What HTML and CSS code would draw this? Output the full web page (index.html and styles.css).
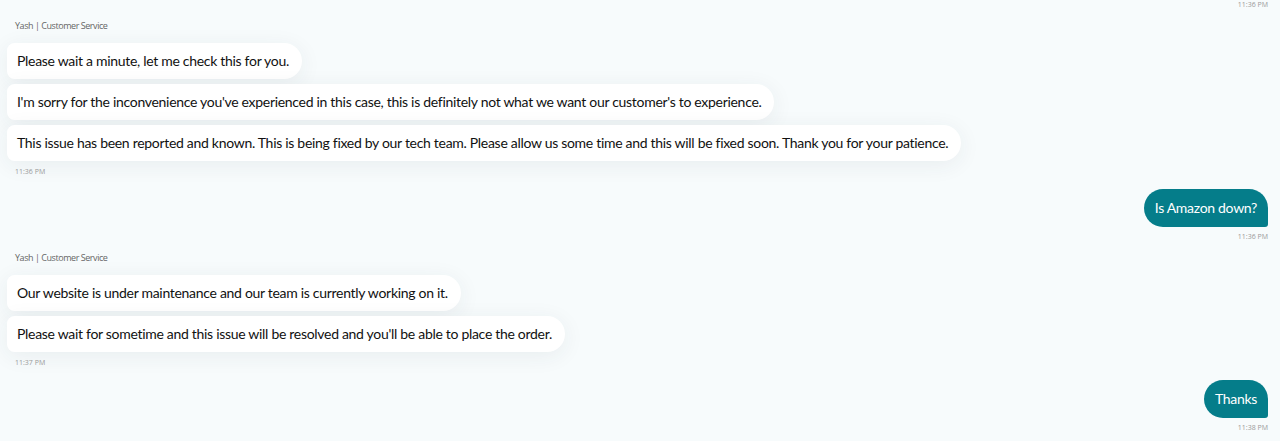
FILE: index.html
```html
<!DOCTYPE html>
<html>
<head>
<meta charset="utf-8">
<link rel="stylesheet" href="styles.css">
</head>
<body>
<div class="chat">
  <div class="stamp stamp-right stamp-top">11:36 PM</div>

  <div class="group agent">
    <div class="sender">Yash | Customer Service</div>
    <div class="bubble in first">Please wait a minute, let me check this for you.</div>
    <div class="bubble in">I'm sorry for the inconvenience you've experienced in this case, this is definitely not what we want our customer's to experience.</div>
    <div class="bubble in">This issue has been reported and known. This is being fixed by our tech team. Please allow us some time and this will be fixed soon. Thank you for your patience.</div>
    <div class="stamp">11:36 PM</div>
  </div>

  <div class="group user">
    <div class="bubble out">Is Amazon down?</div>
    <div class="stamp stamp-right">11:36 PM</div>
  </div>

  <div class="group agent">
    <div class="sender">Yash | Customer Service</div>
    <div class="bubble in first">Our website is under maintenance and our team is currently working on it.</div>
    <div class="bubble in">Please wait for sometime and this issue will be resolved and you'll be able to place the order.</div>
    <div class="stamp">11:37 PM</div>
  </div>

  <div class="group user">
    <div class="bubble out">Thanks</div>
    <div class="stamp stamp-right">11:38 PM</div>
  </div>
</div>
</body>
</html>
```
FILE: styles.css
```css
html, body {
  margin: 0;
  padding: 0;
}
body {
  background: #f7fbfc;
  font-family: Lato, "Noto Sans", Arial, sans-serif;
  height: 441px;
  overflow: hidden;
}
.chat {
  display: flex;
  flex-direction: column;
  padding: 0 12px 0 7px;
}
.stamp {
  font-size: 7px;
  line-height: 9px;
  color: #9a9a9a;
  padding-left: 8px;
  margin-top: 6px;
  font-family: "Open Sans", sans-serif;
}
.stamp-right {
  text-align: right;
  padding-left: 0;
  margin-top: 5px;
}
.stamp-top {
  margin-top: 0;
}
.group {
  display: flex;
  flex-direction: column;
}
.agent {
  align-items: flex-start;
  margin-top: 11px;
}
.sender {
  font-family: "Open Sans", sans-serif;
  font-size: 9px;
  line-height: 12px;
  color: #666;
  padding-left: 8px;
  margin-bottom: 11px;
  letter-spacing: -0.45px;
}
.bubble {
  font-size: 14px;
  line-height: 18px;
  letter-spacing: -0.3px;
  padding: 9px 13px 9px 10px;
  border-radius: 8px 19px 19px 8px;
  font-variant-ligatures: none;
}
.bubble.in {
  background: #ffffff;
  color: #111;
  box-shadow: 0 4px 22px rgba(40, 60, 70, 0.07);
  margin-top: 5px;
}
.bubble.in.first {
  margin-top: 0;
}
.user {
  align-items: flex-end;
  margin-top: 13px;
}
.bubble.out {
  background: #057d8a;
  color: #fff;
  border-radius: 19px 19px 3px 19px;
  padding: 10px 11px;
}
```
